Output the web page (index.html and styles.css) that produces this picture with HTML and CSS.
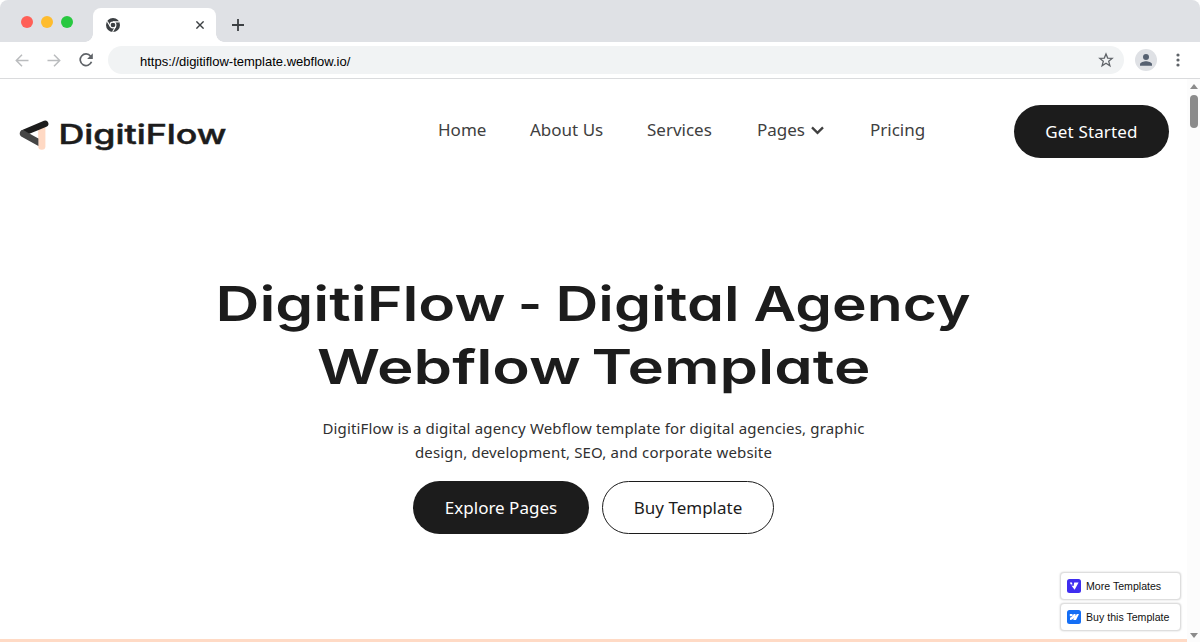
FILE: index.html
```html
<!DOCTYPE html>
<html lang="en">

<head>
    <meta charset="UTF-8" />
    <meta name="viewport" content="width=device-width, initial-scale=1.0" />
    <title>DigitiFlow</title>
    <link rel="stylesheet" href="styles.css">
</head>

<body>
    <div class="browser">
        <div class="tab-bar">
            <div class="dots">
                <span class="dot red"></span>
                <span class="dot yellow"></span>
                <span class="dot green"></span>
            </div>
            <div class="tab">
                <svg width="14" height="14" viewBox="0 0 14 14">
                    <circle cx="7" cy="7" r="7" fill="#3c4043" />
                    <circle cx="7" cy="7" r="2.9" fill="none" stroke="#fff" stroke-width="1.1" />
                    <path d="M7 3.9H13.2M4.3 8.5L1.3 3.4M9.7 8.5L6.6 13.8" stroke="#fff" stroke-width="1.1" />
                </svg>
                <svg width="8" height="8" viewBox="0 0 8 8">
                    <path d="M.4 .4L7.6 7.6M7.6 .4L.4 7.6" stroke="#3c4043" stroke-width="1.4" />
                </svg>
            </div>
            <svg class="new-tab" width="12" height="12" viewBox="0 0 12 12">
                <path d="M6 0V12M0 6H12" stroke="#3c4043" stroke-width="1.8" />
            </svg>
        </div>
        <div class="toolbar">
            <svg class="tool" width="14" height="13" viewBox="0 0 14 13">
                <path d="M13.5 6.5H1.5M7 .8L1.3 6.5L7 12.2" fill="none" stroke="#babcbe" stroke-width="1.5" />
            </svg>
            <svg class="tool" width="14" height="13" viewBox="0 0 14 13">
                <path d="M.5 6.5H12.5M7 .8L12.7 6.5L7 12.2" fill="none" stroke="#babcbe" stroke-width="1.5" />
            </svg>
            <svg class="reload" width="14" height="14" viewBox="0 0 14 14">
                <path d="M11.6 3.2A5.8 5.8 0 1 0 12.5 8.7" fill="none" stroke="#5f6368" stroke-width="1.7" />
                <path d="M13.8 .3V6H8.1Z" fill="#5f6368" />
            </svg>
            <div class="address">
                <span>https://digitiflow-template.webflow.io/</span>
                <svg width="16" height="16" viewBox="0 0 16 16">
                    <path d="M8 1.9L9.7 6.1L14.2 6.4L10.7 9.3L11.9 13.7L8 11.2L4.1 13.7L5.3 9.3L1.8 6.4L6.3 6.1Z" fill="none" stroke="#5f6368" stroke-width="1.3" />
                </svg>
            </div>
            <svg class="avatar" width="22" height="22" viewBox="0 0 22 22">
                <circle cx="11" cy="11" r="11" fill="#dfe1e5" />
                <circle cx="11" cy="8" r="3" fill="#566171" />
                <path d="M5 16.8V15.3C5 13.3 9 12.3 11 12.3S17 13.3 17 15.3V16.8Z" fill="#566171" />
            </svg>
            <svg width="4" height="14" viewBox="0 0 4 14">
                <g fill="#5f6368">
                    <circle cx="2" cy="2" r="1.6" />
                    <circle cx="2" cy="7" r="1.6" />
                    <circle cx="2" cy="12" r="1.6" />
                </g>
            </svg>
        </div>

        <div class="viewport">
            <div class="page">
                <header class="navbar">
                    <a class="logo">
                        <svg width="210" height="36" viewBox="0 0 210 36">
                            <path d="M22.8 10V29.2" stroke="#ffd9c4" stroke-width="7.2" stroke-linecap="round" />
                            <path d="M5 15.6L26.2 6.7" stroke="#1c1c1c" stroke-width="6.4" stroke-linecap="round" />
                            <path d="M2.6 13.3C.2 14.7 .2 18.2 2.2 19.4L19.4 29V21.4L9.4 16L5.2 13.4C4.3 12.9 3.4 12.9 2.6 13.3Z" fill="#454545" />
                            <text class="logo-text" x="39.5" y="27.2" textLength="168" lengthAdjust="spacingAndGlyphs">DigitiFlow</text>
                        </svg>
                    </a>
                    <nav class="menu">
                        <a class="home">Home</a>
                        <a class="about">About Us</a>
                        <a class="services">Services</a>
                        <a class="pages">Pages
                            <svg width="13" height="9" viewBox="0 0 13 9">
                                <path d="M1 1.4L6.5 6.9L12 1.4" fill="none" stroke="#404040" stroke-width="2.3" />
                            </svg>
                        </a>
                        <a class="pricing">Pricing</a>
                    </nav>
                    <a class="btn btn-dark started">Get Started</a>
                </header>

                <section class="hero">
                    <h1>
                        <svg width="760" height="130" viewBox="0 0 760 130">
                            <g class="hero-title">
                                <text x="1.5" y="49.5" textLength="290" lengthAdjust="spacingAndGlyphs">DigitiFlow</text>
                                <text x="304" y="49.5" textLength="24" lengthAdjust="spacingAndGlyphs">-</text>
                                <text x="341.5" y="49.5" textLength="184" lengthAdjust="spacingAndGlyphs">Digital</text>
                                <text x="539.5" y="49.5" textLength="217" lengthAdjust="spacingAndGlyphs">Agency</text>
                                <text x="103" y="112.8" textLength="264" lengthAdjust="spacingAndGlyphs">Webflow</text>
                                <text x="377.5" y="112.8" textLength="279" lengthAdjust="spacingAndGlyphs">Template</text>
                            </g>
                        </svg>
                    </h1>
                    <p class="line-one">DigitiFlow is a digital agency Webflow template for digital agencies, graphic</p>
                    <p class="line-two">design, development, SEO, and corporate website</p>
                    <div class="actions">
                        <a class="btn btn-dark explore">Explore Pages</a>
                        <a class="btn btn-light buy">Buy Template</a>
                    </div>
                </section>
                <div class="next-section"></div>
            </div>

            <div class="scrollbar">
                <svg width="8" height="5" viewBox="0 0 8 5">
                    <path d="M0 5L4 0L8 5Z" fill="#8b8b8b" />
                </svg>
                <div class="thumb"></div>
                <svg width="8" height="5" viewBox="0 0 8 5">
                    <path d="M0 0L4 5L8 0Z" fill="#8b8b8b" />
                </svg>
            </div>
        </div>

        <div class="badges">
            <a class="badge">
                <svg width="14" height="14" viewBox="0 0 14 14">
                    <rect width="14" height="14" rx="2.5" fill="#3f2df0" />
                    <path d="M7.2 3.6H11.6L7.6 10.8L4.4 6.4L6.6 6.9Z" fill="#fff" />
                    <path d="M2.8 3.6H5L5.4 5.4H3.8Z" fill="#fff" />
                </svg>
                <span>More Templates</span>
            </a>
            <a class="badge">
                <svg width="14" height="14" viewBox="0 0 14 14">
                    <rect width="14" height="14" rx="2.5" fill="#146ef5" />
                    <path d="M12 4L9 9.9H6.2L7.4 7.4C6.4 8.8 5 9.7 3 9.9V7.5C4.2 7.4 4.9 6.8 5.4 6.2H2.8V4H5.5V5.9L6.8 4H8.5V5.9L9.8 4Z" fill="#fff" />
                </svg>
                <span>Buy this Template</span>
            </a>
        </div>
    </div>
</body>

</html>
```
FILE: styles.css
```css
* {
    box-sizing: border-box;
}

body {
    margin: 0;
    background-color: white;
    font-family: "Noto Sans", sans-serif;
}

svg {
    display: block;
    flex-shrink: 0;
}

.browser {
    position: relative;
    display: flex;
    flex-direction: column;
    height: 642px;
    overflow: hidden;
}

/* tabs */
.tab-bar {
    display: flex;
    align-items: flex-end;
    height: 42px;
    background-color: #dfe1e5;
    border-radius: 8px 8px 0 0;
}

.dots {
    display: flex;
    gap: 8px;
    width: 93px;
    padding: 0 0 14px 21px;
}

.dot {
    width: 12px;
    height: 12px;
    border-radius: 50%;
}

.red {
    background-color: #ff5f57;
}

.yellow {
    background-color: #febc2e;
}

.green {
    background-color: #28c840;
}

.tab {
    position: relative;
    display: flex;
    align-items: center;
    justify-content: space-between;
    width: 123px;
    height: 34px;
    padding: 0 12px 0 13px;
    background-color: white;
    border-radius: 8px 8px 0 0;
}

.tab::before,
.tab::after {
    content: "";
    position: absolute;
    bottom: 0;
    width: 8px;
    height: 8px;
}

.tab::before {
    left: -8px;
    background: radial-gradient(circle at 0 0, transparent 7.5px, white 8px);
}

.tab::after {
    right: -8px;
    background: radial-gradient(circle at 100% 0, transparent 7.5px, white 8px);
}

.new-tab {
    margin: 0 0 11px 16px;
}

.toolbar {
    display: flex;
    align-items: center;
    height: 37px;
    padding: 0 20px 0 15px;
    border-bottom: 1px solid #dadbdd;
}

.tool {
    margin-right: 18px;
}

.reload {
    margin-right: 15px;
}

.address {
    display: flex;
    align-items: center;
    justify-content: space-between;
    width: 1016px;
    height: 28px;
    padding: 0 10px 0 32px;
    border-radius: 14px;
    background-color: #f1f3f4;
    font: 13px "Liberation Sans", sans-serif;
    color: #000;
}

.address span {
    padding-top: 2px;
}

.avatar {
    margin: 0 19px 0 11px;
}

/* page */
.viewport {
    display: flex;
    flex: 1;
}

.page {
    display: flex;
    flex-direction: column;
    width: 1187px;
}

.navbar {
    display: flex;
    height: 106px;
    padding: 26px 18px 0 19px;
}

.logo {
    width: 419px;
    padding-top: 12px;
}

.logo-text {
    font: 500 27px Inter, sans-serif;
    font-feature-settings: "cv11";
    fill: #1c1c1c;
    stroke: #1c1c1c;
    stroke-width: 0.5px;
}

.menu {
    display: flex;
    align-items: flex-start;
    width: 576px;
    padding-top: 13px;
    font-size: 17px;
    line-height: 24px;
    color: #404040;
    white-space: nowrap;
}

.home {
    width: 92px;
}

.about {
    width: 117px;
}

.services {
    width: 110px;
}

.pages {
    display: flex;
    align-items: center;
    gap: 6px;
    width: 113px;
}

.btn {
    display: flex;
    align-items: center;
    justify-content: center;
    height: 53px;
    border-radius: 27px;
    font-size: 17px;
    white-space: nowrap;
}

.btn-dark {
    background-color: #1c1c1c;
    color: white;
}

.btn-light {
    border: 1px solid #1c1c1c;
    color: #1c1c1c;
}

.started {
    width: 155px;
    letter-spacing: 0.15px;
}

.hero {
    display: flex;
    flex-direction: column;
    align-items: center;
    padding-top: 86px;
}

h1 {
    margin: 0;
}

.hero-title {
    font: 600 48px Inter, sans-serif;
    font-feature-settings: "cv11";
    fill: #1c1c1c;
}

.hero p {
    margin: 0;
    font-size: 15px;
    line-height: 24px;
    letter-spacing: 0.16px;
    color: #303030;
    white-space: nowrap;
}

.hero .line-one {
    margin-top: 15px;
}

.actions {
    display: flex;
    gap: 13px;
    margin-top: 17px;
}

.explore {
    width: 176px;
}

.buy {
    width: 172px;
}

.next-section {
    height: 3px;
    margin-top: auto;
    background-color: #ffdac5;
}

.scrollbar {
    display: flex;
    flex-direction: column;
    align-items: center;
    width: 13px;
    padding: 5px 0 4px;
    background-color: #fcfcfc;
}

.thumb {
    width: 8px;
    height: 33px;
    margin: 6px 0 auto;
    border-radius: 4px;
    background-color: #8b8b8b;
}

/* floating badges */
.badges {
    position: absolute;
    right: 19px;
    bottom: 11px;
    display: flex;
    flex-direction: column;
    gap: 3px;
}

.badge {
    display: flex;
    align-items: center;
    gap: 5px;
    width: 121px;
    height: 28px;
    padding-left: 6px;
    border: 1px solid #dedede;
    border-radius: 4px;
    box-shadow: 0 0 2px rgba(0, 0, 0, 0.2);
    background-color: white;
    font: 10.6px "Liberation Sans", sans-serif;
    color: #111;
    white-space: nowrap;
}
```
